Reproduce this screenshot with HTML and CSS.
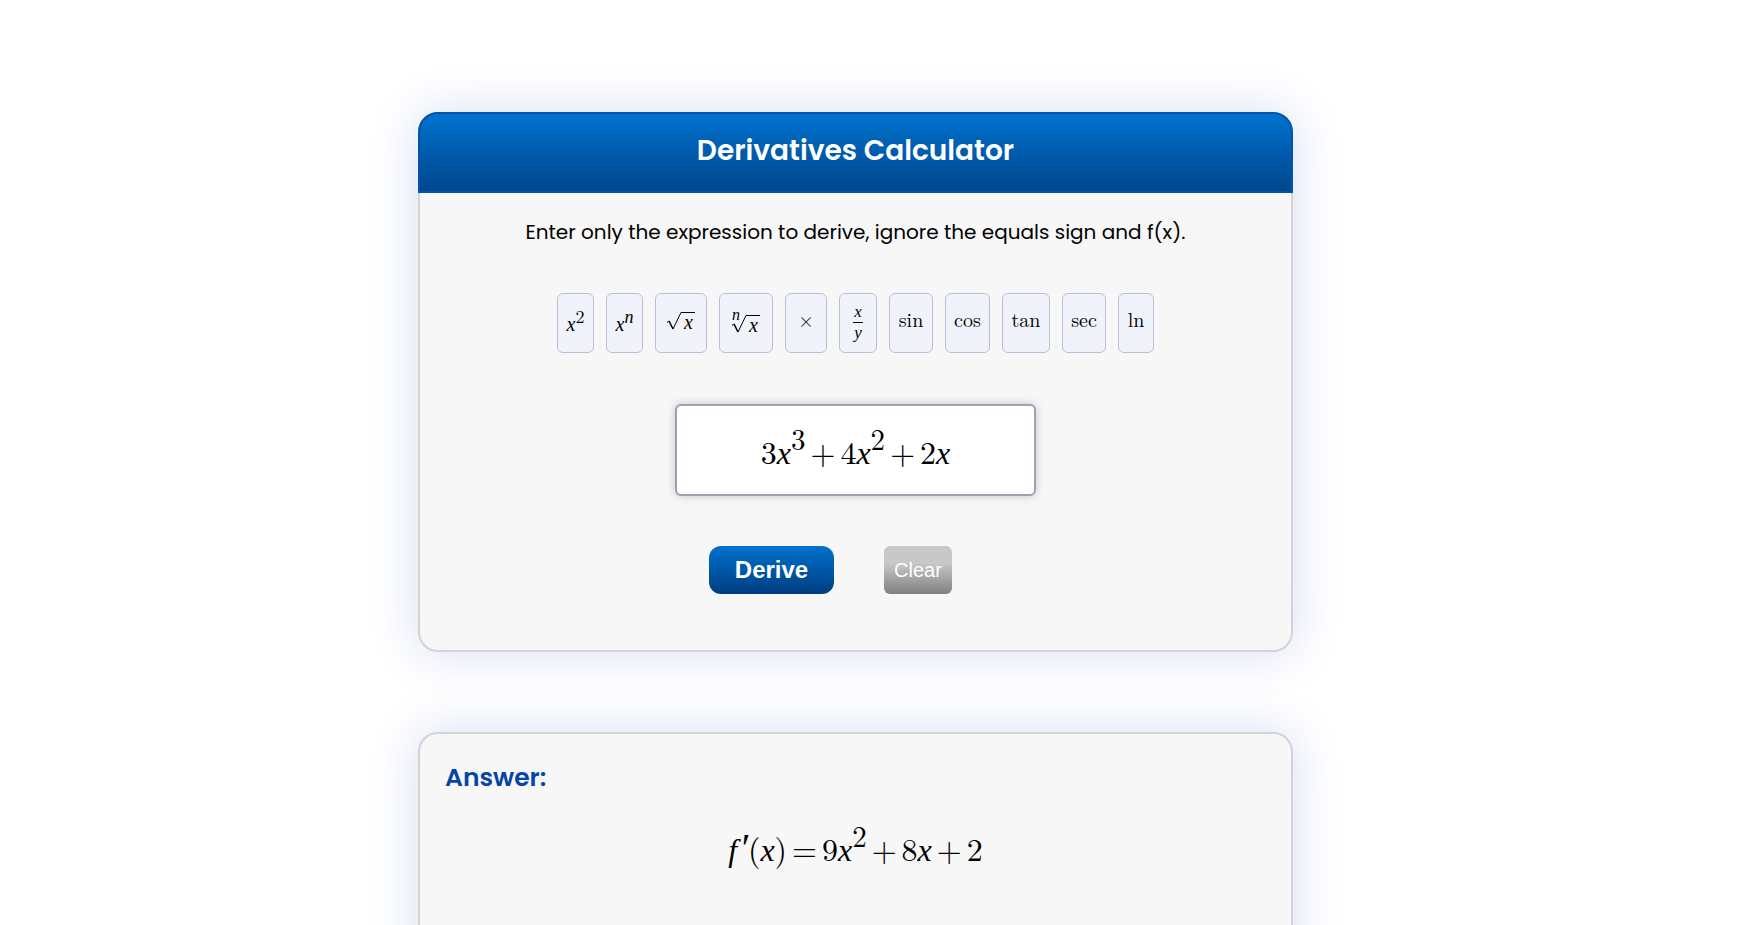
FILE: index.html
```html
<!DOCTYPE html>
<html lang="en">
<head>
<meta charset="utf-8">
<meta name="viewport" content="width=device-width, initial-scale=1">
<title>Derivatives Calculator</title>
<link rel="stylesheet" href="styles.css">
</head>
<body>
<main class="page">
  <section class="card">
    <header class="card-header"><h1 class="title">Derivatives Calculator</h1></header>
    <div class="card-body">
      <p class="hint" id="hint">Enter only the expression to derive, ignore the equals sign and f(x).</p>
      <div class="keys">
        <button type="button" class="key" aria-label="x squared"><span class="power"><i>x</i><sup>2</sup></span></button>
        <button type="button" class="key" aria-label="x to the n"><span class="power"><i>x</i><sup><i>n</i></sup></span></button>
        <button type="button" class="key key-root" aria-label="square root"><span class="root"><svg class="radical" viewBox="0 0 14 18" aria-hidden="true"><path d="M0 10.500 2 9" stroke-width="1"/><path d="M2 9 6 17" stroke-width="1.600"/><path d="M6 17 14 .5" stroke-width="1"/></svg><i class="radicand">x</i></span></button>
        <button type="button" class="key key-nroot" aria-label="nth root"><span class="root nroot"><i class="index">n</i><svg class="radical" viewBox="0 0 14 18" aria-hidden="true"><path d="M0 10.500 2 9" stroke-width="1"/><path d="M2 9 6 17" stroke-width="1.600"/><path d="M6 17 14 .5" stroke-width="1"/></svg><i class="radicand">x</i></span></button>
        <button type="button" class="key key-times" aria-label="multiply">×</button>
        <button type="button" class="key key-fraction" aria-label="x over y"><span class="fraction"><i class="numerator">x</i><i class="denominator">y</i></span></button>
        <button type="button" class="key key-word">sin</button>
        <button type="button" class="key key-word key-cos">cos</button>
        <button type="button" class="key key-word key-tan">tan</button>
        <button type="button" class="key key-word">sec</button>
        <button type="button" class="key key-word key-ln">ln</button>
      </div>
      <div class="field math" role="textbox" contenteditable="true" spellcheck="false" aria-labelledby="hint"><span>3<i>x</i><sup>3</sup><span class="op">+</span>4<i>x</i><sup>2</sup><span class="op">+</span>2<i>x</i></span></div>
      <div class="actions">
        <button type="button" class="derive">Derive</button>
        <button type="button" class="clear">Clear</button>
      </div>
    </div>
  </section>
  <section class="card answer">
    <h2 class="answer-title">Answer:</h2>
    <p class="result math"><i class="fn">f</i><i class="prime">′</i>(<i>x</i>)<span class="op">=</span>9<i>x</i><sup>2</sup><span class="op">+</span>8<i>x</i><span class="op">+</span>2</p>
  </section>
</main>
</body>
</html>
```
FILE: styles.css
```css
* { box-sizing: border-box; }
body { margin: 0; background: #fff; color: #000; font-family: Poppins, Inter, sans-serif; }
.page {
  display: flex;
  flex-direction: column;
  align-items: center;
  gap: 80px;
  padding: 112px 32px 80px 0;
}
.card {
  width: 100%;
  max-width: 875px;
  background: #f7f7f7;
  border: 2px solid #d3d3d3;
  border-radius: 20px;
  box-shadow: 0 0 50px rgba(45, 85, 200, 0.2);
}
.card-header {
  margin: -2px -2px 0;
  padding: 19px 20px 22px;
  border: 2px solid #0054ae;
  border-radius: 20px 20px 0 0;
  background: linear-gradient(#0072ce, #00468c);
}
.title { margin: 0; color: #fff; font-size: 28px; line-height: 36px; font-weight: 600; text-align: center; }
.card-body {
  display: flex;
  flex-direction: column;
  align-items: center;
  padding: 24px 24px 56px;
}
.hint { margin: 0; font-size: 20px; line-height: 30px; text-align: center; }
.keys { display: flex; flex-wrap: wrap; justify-content: center; gap: 12px; margin-top: 46px; }
.key {
  display: flex;
  justify-content: center;
  align-items: center;
  width: 37px;
  height: 60px;
  padding: 0;
  border: 1px solid #bdbdd7;
  border-radius: 6px;
  background: #f0f4fa;
  color: #000;
  font-family: "Latin Modern Roman", KaTeX_Main, "Liberation Serif", serif;
  font-size: 20px;
  line-height: 20px;
}
.key i, .math i { font-family: "Liberation Serif", serif; }
.key-root { width: 52px; }
.key-nroot { width: 54px; }
.key-times { width: 42px; padding-bottom: 8px; }
.key-fraction { width: 38px; }
.key-word { width: 44px; padding-bottom: 8px; }
.key-cos { width: 45px; }
.key-tan { width: 48px; }
.key-ln { width: 36px; }
.power sup { font-size: 18px; line-height: 0; vertical-align: 8px; }
.root { display: flex; align-items: flex-start; padding-bottom: 4px; }
.nroot { padding: 3px 0 0; }
.radical { width: 14px; height: 18px; fill: none; stroke: #000; }
.radicand { width: 14px; padding-left: 1px; border-top: 1px solid #000; line-height: 18px; }
.index { width: 8px; margin-right: -8px; font-size: 16px; line-height: 0; }
.fraction { display: flex; flex-direction: column; font-size: 17px; padding-bottom: 2px; }
.numerator { border-bottom: 1px solid #000; padding: 0 1px; line-height: 20px; }
.denominator { line-height: 20px; }
.math { font-family: "Latin Modern Roman", KaTeX_Main, "Liberation Serif", serif; font-size: 32px; line-height: 40px; text-align: center; }
.math sup { font-size: 29px; line-height: 0; vertical-align: 14px; }
.op { margin: 0 5px; }
.field {
  width: 100%;
  max-width: 361px;
  margin-top: 51px;
  padding: 25px 16px 21px;
  border: 2px solid #a0a0b0;
  border-radius: 6px;
  background: #fff;
  box-shadow: 0 0 10px rgba(0, 0, 0, 0.2);
}
.actions { display: flex; gap: 50px; margin: 50px 50px 0 0; }
.derive, .clear { height: 48px; padding: 0; border: 0; color: #fff; font-family: "Liberation Sans", sans-serif; }
.derive { width: 125px; border-radius: 12px; background: linear-gradient(#0072ce, #003d80); font-size: 24px; font-weight: 700; }
.clear { width: 68px; border-radius: 6px; background: linear-gradient(#c8c8c8 35%, #808080); font-size: 20px; }
.answer { min-height: 320px; padding: 25px; }
.answer-title { margin: 0; color: #0645a8; font-size: 25px; line-height: 38px; font-weight: 600; }
.result { margin: 31px 0 0; }
.fn { padding-right: 2px; }
.math .prime { font-size: 40px; line-height: 0; }
```
